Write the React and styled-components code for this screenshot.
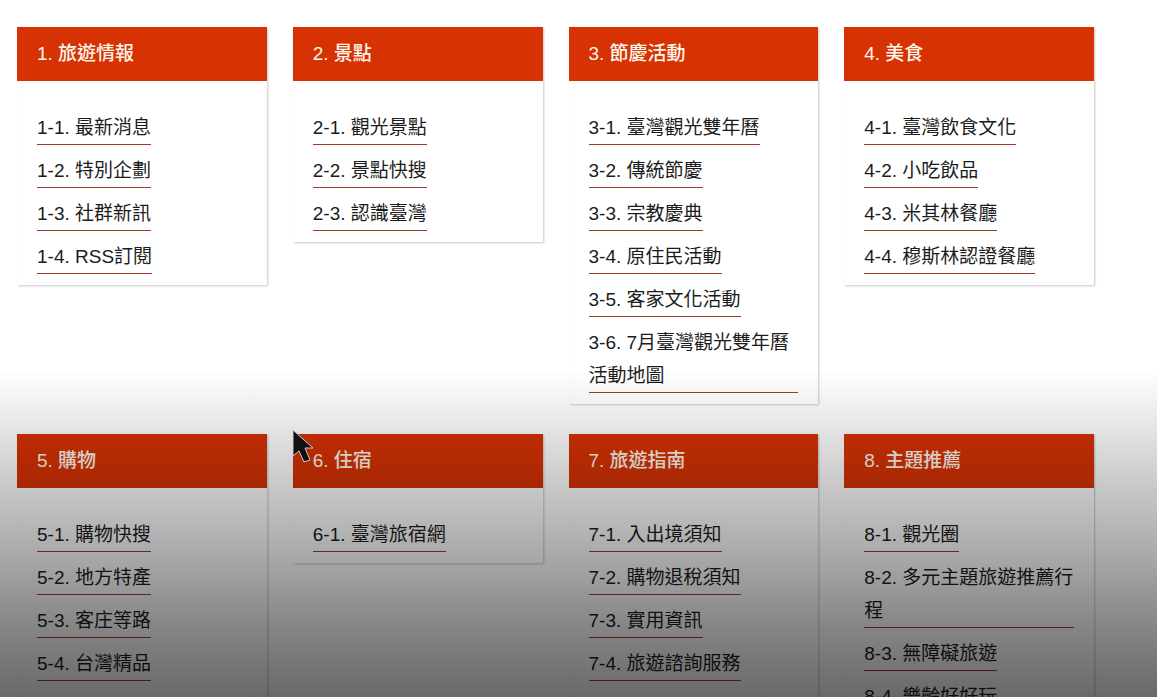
import React from "react";
import styled, { createGlobalStyle } from "styled-components";

const GlobalStyle = createGlobalStyle`
  *, *::before, *::after { box-sizing: border-box; }
  body {
    margin: 0;
    background: #fff;
    font-family: "Liberation Sans", "Noto Sans CJK TC", sans-serif;
    font-size: 19px;
    line-height: 33px;
  }
`;

const Page = styled.main`
  position: relative;
  height: 100vh;
  overflow: hidden;
`;

const SiteMap = styled.nav`
  display: grid;
  grid-template-columns: repeat(4, minmax(0, 1fr));
  align-items: start;
  gap: 30px 26px;
  padding: 27px 63px 30px 17px;
`;

const Card = styled.section`
  align-self: ${({ $stretch }) => ($stretch ? "stretch" : "start")};
  background: #fff;
  box-shadow: 1px 1px 2px rgba(0, 0, 0, 0.22);
`;

const CardTitle = styled.h2`
  margin: 0;
  padding: 10px 20px 11px;
  background: #d63204;
  color: #fff6ea;
  font-size: 19px;
  font-weight: 500;
`;

const LinkList = styled.ul`
  display: flex;
  flex-direction: column;
  align-items: flex-start;
  gap: 9px;
  margin: 0;
  padding: 30px 20px 11px;
  list-style: none;
`;

const ListLink = styled.a`
  display: block;
  border-bottom: 1px solid #9c3d2c;
  color: #1c1c1c;
  text-decoration: none;
`;

const Shade = styled.div`
  position: absolute;
  inset: 0;
  pointer-events: none;
  background: linear-gradient(
    to bottom,
    rgba(0, 0, 0, 0) 53%,
    rgba(0, 0, 0, 0.06) 58%,
    rgba(0, 0, 0, 0.22) 70%,
    rgba(0, 0, 0, 0.34) 80%,
    rgba(0, 0, 0, 0.48) 90%,
    rgba(0, 0, 0, 0.59) 100%
  );
`;

const Pointer = styled.svg`
  position: absolute;
  left: 291px;
  top: 428px;
  width: 24px;
  height: 36px;
`;

const sections = [
  { title: "旅遊情報", links: ["最新消息", "特別企劃", "社群新訊", "RSS訂閱"] },
  { title: "景點", links: ["觀光景點", "景點快搜", "認識臺灣"] },
  {
    title: "節慶活動",
    links: ["臺灣觀光雙年曆", "傳統節慶", "宗教慶典", "原住民活動", "客家文化活動", "7月臺灣觀光雙年曆活動地圖"],
  },
  { title: "美食", links: ["臺灣飲食文化", "小吃飲品", "米其林餐廳", "穆斯林認證餐廳"] },
  { title: "購物", stretch: true, links: ["購物快搜", "地方特產", "客庄等路", "台灣精品"] },
  { title: "住宿", links: ["臺灣旅宿網"] },
  { title: "旅遊指南", stretch: true, links: ["入出境須知", "購物退稅須知", "實用資訊", "旅遊諮詢服務"] },
  { title: "主題推薦", links: ["觀光圈", "多元主題旅遊推薦行程", "無障礙旅遊", "樂齡好好玩"] },
];

export default function App() {
  return (
    <>
      <GlobalStyle />
      <Page>
        <SiteMap>
          {sections.map((section, i) => (
            <Card key={section.title} $stretch={section.stretch}>
              <CardTitle>{`${i + 1}. ${section.title}`}</CardTitle>
              <LinkList>
                {section.links.map((label, j) => (
                  <li key={label}>
                    <ListLink href="#">{`${i + 1}-${j + 1}. ${label}`}</ListLink>
                  </li>
                ))}
              </LinkList>
            </Card>
          ))}
        </SiteMap>
        <Shade />
        <Pointer viewBox="0 0 24 36" aria-hidden="true">
          <path d="M2 2V28L8 23L13 34L19 32L14 20H22Z" fill="#111" stroke="#ccc" strokeWidth="1" />
        </Pointer>
      </Page>
    </>
  );
}
